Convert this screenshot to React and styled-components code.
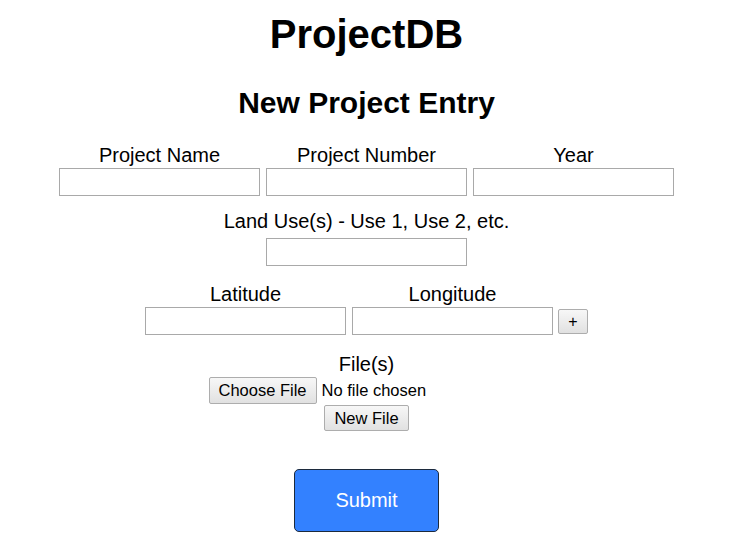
import React from 'react';
import styled, { createGlobalStyle } from 'styled-components';

const GlobalStyle = createGlobalStyle`
    body {
        margin: 0;
        background: #ffffff;
        font-family: "Liberation Sans", Arial, sans-serif;
        color: #000000;
    }
`

const Page = styled.main`
    display: flex;
    flex-direction: column;
    align-items: center;
    padding: 11px 4px 0 0;
`

const Title = styled.h1`
    margin: 0;
    font-size: 40px;
    line-height: 46px;
    font-weight: bold;
`

const Subtitle = styled.h2`
    margin: 29px 0 0;
    font-size: 30px;
    line-height: 34px;
    font-weight: bold;
`

const Form = styled.form`
    display: flex;
    flex-direction: column;
    align-items: center;
    margin-top: 24px;
`

const FieldRow = styled.div`
    display: flex;
    gap: 6px;
    align-items: flex-end;
    margin-top: ${({ $top }) => $top || 0}px;
`

const Field = styled.div`
    display: flex;
    flex-direction: column;
    align-items: center;
`

const Label = styled.label`
    font-size: 20px;
    line-height: 23px;
    margin-bottom: ${({ $gap }) => $gap ?? 1}px;
    white-space: nowrap;
`

const TextInput = styled.input`
    box-sizing: border-box;
    width: 201px;
    height: 28px;
    margin: 0;
    border: 1px solid #a9a9a9;
    background: #ffffff;
    font-family: inherit;
    font-size: 16px;
`

const GrayButton = styled.button`
    box-sizing: border-box;
    height: ${({ $h }) => $h || 26}px;
    width: ${({ $w }) => ($w ? `${$w}px` : 'auto')};
    padding: 0 9px;
    margin: 0;
    border: 1px solid #adadad;
    border-radius: 2px;
    background: linear-gradient(#f7f7f7, #e1e1e1);
    font-family: inherit;
    font-size: 16.5px;
    color: #000000;
    cursor: pointer;
`

const PlusButton = styled(GrayButton)`
    padding: 0;
    font-size: 16px;
    margin: 0 0 1px -1px;
`

const FileRow = styled.div`
    display: flex;
    align-items: center;
    gap: 5px;
    width: 316px;
`

const FileStatus = styled.span`
    font-size: 16.5px;
    white-space: nowrap;
`

const NewFileButton = styled(GrayButton)`
    margin-top: 1px;
`

const SubmitButton = styled.button`
    box-sizing: border-box;
    width: 145px;
    height: 63px;
    margin-top: 38px;
    border: 1px solid #1c2a3d;
    border-radius: 5px;
    background: #3381ff;
    color: #ffffff;
    font-family: inherit;
    font-size: 20px;
    cursor: pointer;
`

const App = () => {
    return (
        <>
            <GlobalStyle />
            <Page>
                <Title>ProjectDB</Title>
                <Subtitle>New Project Entry</Subtitle>
                <Form onSubmit={(e) => e.preventDefault()}>
                    <FieldRow>
                        <Field>
                            <Label>Project Name</Label>
                            <TextInput type="text" />
                        </Field>
                        <Field>
                            <Label>Project Number</Label>
                            <TextInput type="text" />
                        </Field>
                        <Field>
                            <Label>Year</Label>
                            <TextInput type="text" />
                        </Field>
                    </FieldRow>
                    <FieldRow $top={14}>
                        <Field>
                            <Label $gap={5}>Land Use(s) - Use 1, Use 2, etc.</Label>
                            <TextInput type="text" />
                        </Field>
                    </FieldRow>
                    <FieldRow $top={17}>
                        <Field>
                            <Label>Latitude</Label>
                            <TextInput type="text" />
                        </Field>
                        <Field>
                            <Label>Longitude</Label>
                            <TextInput type="text" />
                        </Field>
                        <PlusButton type="button" $w={30} $h={25}>+</PlusButton>
                    </FieldRow>
                    <FieldRow $top={18}>
                        <Field>
                            <Label>File(s)</Label>
                            <FileRow>
                                <GrayButton type="button" $h={27}>Choose File</GrayButton>
                                <FileStatus>No file chosen</FileStatus>
                            </FileRow>
                            <NewFileButton type="button" $h={26}>New File</NewFileButton>
                        </Field>
                    </FieldRow>
                    <SubmitButton type="submit">Submit</SubmitButton>
                </Form>
            </Page>
        </>
    );
};

export default App;
